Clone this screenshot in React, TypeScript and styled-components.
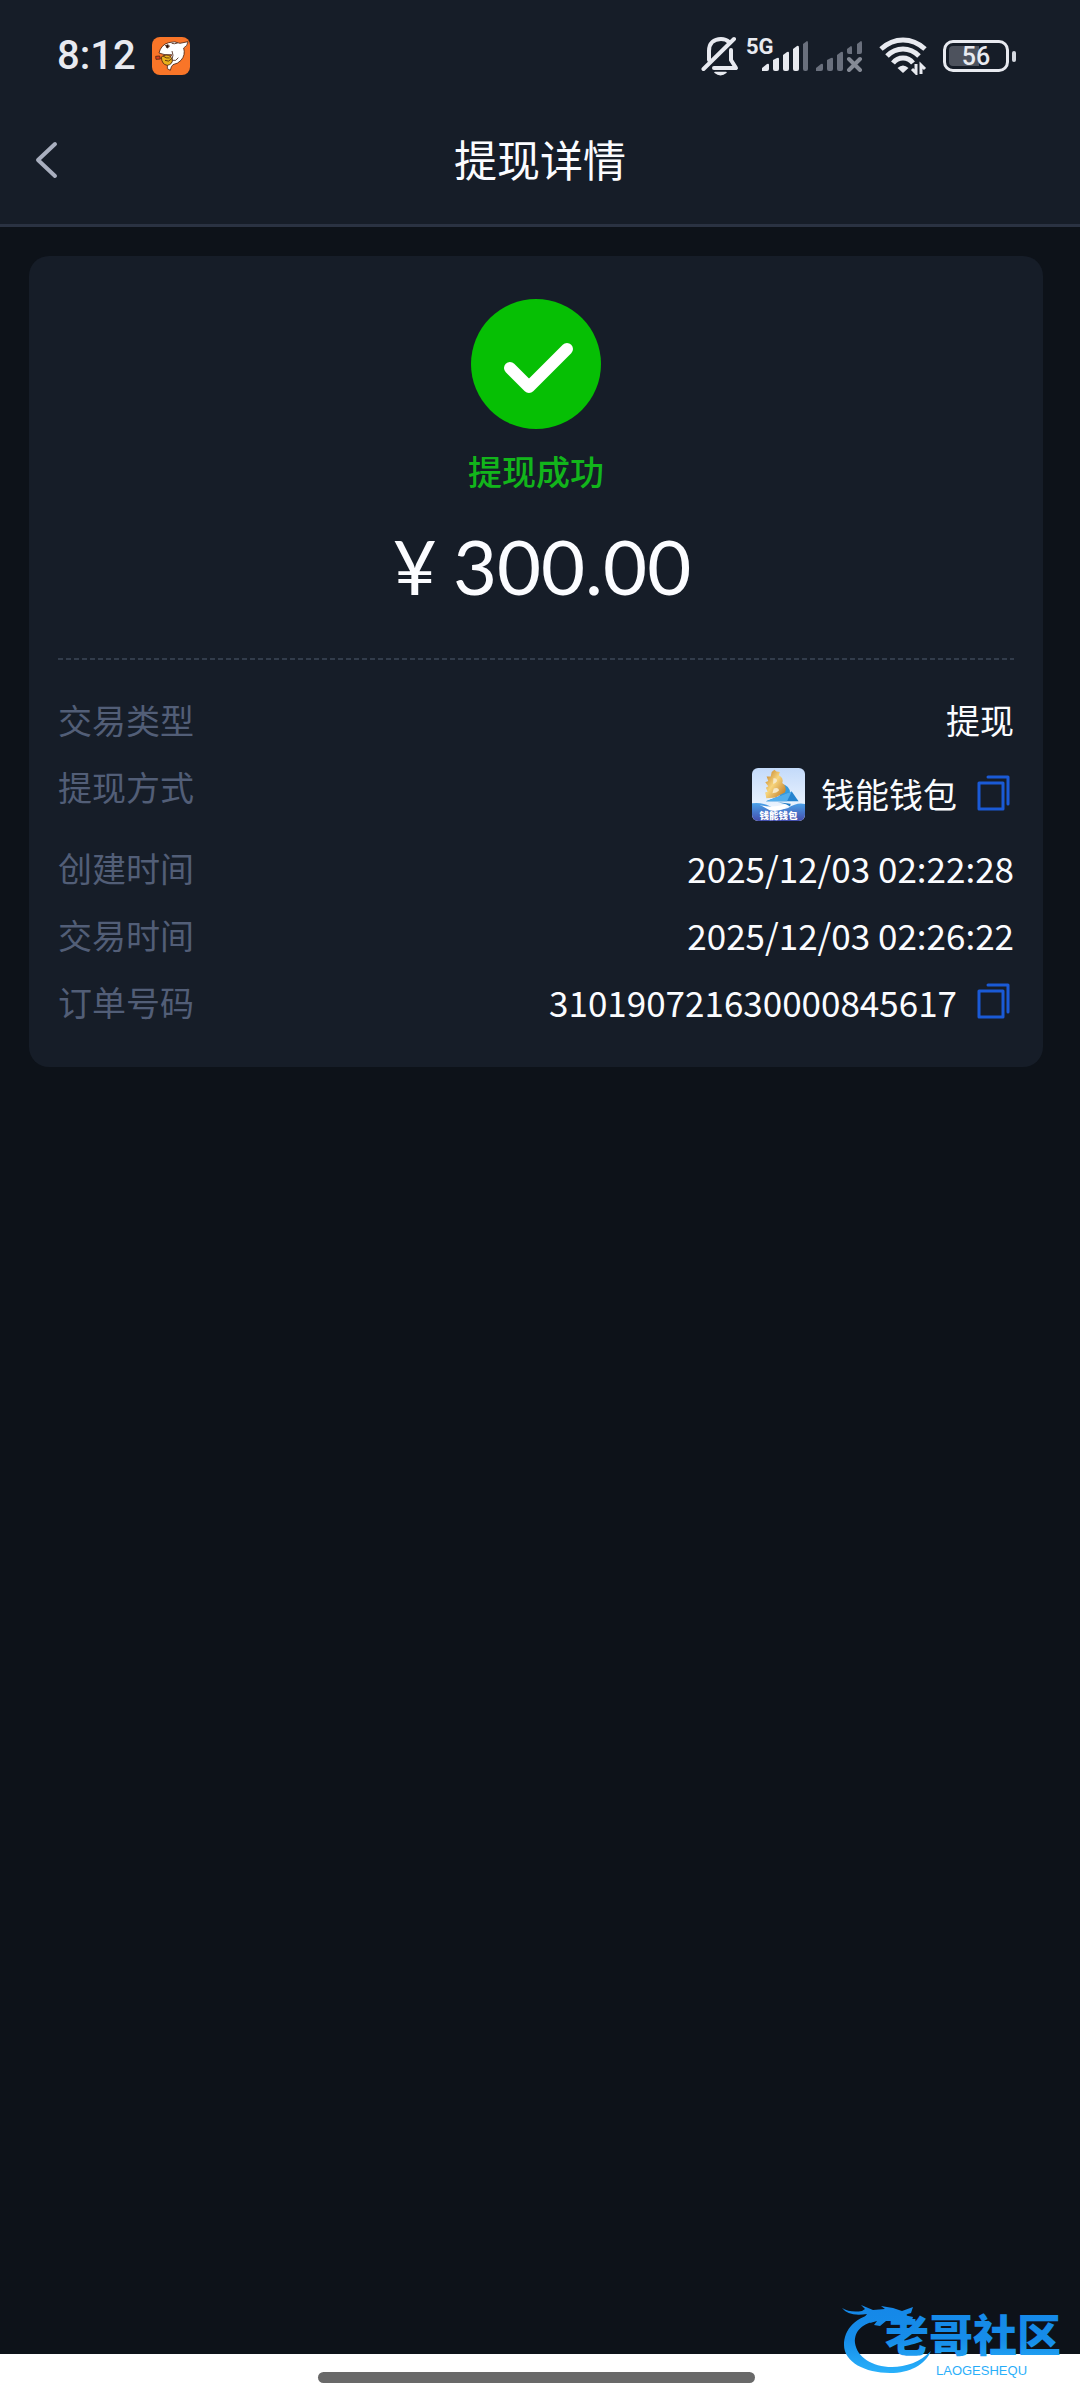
import React from "react";
import styled, { createGlobalStyle } from "styled-components";

const GlobalStyle = createGlobalStyle`
  *, *::before, *::after { box-sizing: border-box; }
  body {
    margin: 0;
    background: #0d1219;
    color: #fbfcff;
    font-family: "Noto Sans CJK SC", "Noto Sans", sans-serif;
  }
  svg { display: block; flex: none; }
`;

const Page = styled.div`
  position: relative;
  display: flex;
  flex-direction: column;
  min-height: 100vh;
`;

const StatusBar = styled.div`
  display: flex;
  align-items: center;
  justify-content: space-between;
  height: 112px;
  padding: 0 64px 0 57px;
  background: #161d28;
  color: #e8eaf0;
`;

const StatusGroup = styled.div<{ $gap: number }>`
  display: flex;
  align-items: center;
  gap: ${(p) => p.$gap}px;
`;

const Clock = styled.time`
  font-family: Roboto, sans-serif;
  font-size: 40px;
  line-height: 56px;
  font-weight: 500;
`;

const Signal = styled.div`
  position: relative;
  padding-left: 16px;
`;

const NetworkType = styled.span`
  position: absolute;
  left: 0;
  top: -5px;
  font-family: Roboto, sans-serif;
  font-size: 22px;
  line-height: 22px;
  font-weight: 700;
`;

const Battery = styled.div`
  display: flex;
  align-items: center;
  gap: 3px;

  &::after {
    content: "";
    width: 4px;
    height: 11px;
    border-radius: 2px;
    background: #d5d8df;
  }
`;

const BatteryBody = styled.div<{ $level: number }>`
  width: 66px;
  height: 32px;
  padding: 3px;
  border: 3px solid #e8eaf0;
  border-radius: 10px;
  background: linear-gradient(to right, #4d525d ${(p) => p.$level}%, transparent ${(p) => p.$level}%) content-box;
  font-family: Roboto, sans-serif;
  font-size: 25px;
  line-height: 22px;
  font-weight: 500;
  text-align: center;
`;

const Header = styled.header`
  display: grid;
  grid-template-columns: 96px 1fr 96px;
  align-items: center;
  padding-bottom: 16px;
  border-bottom: 3px solid #2a3242;
  background: #161d28;
`;

const BackButton = styled.button`
  display: flex;
  align-items: center;
  height: 96px;
  padding: 0 0 0 34px;
  border: 0;
  background: none;
  color: #a9afbf;
  cursor: pointer;
`;

const Title = styled.h1`
  margin: 0;
  padding-bottom: 4px;
  font-size: 43px;
  line-height: 64px;
  font-weight: 400;
  text-align: center;
`;

const Content = styled.main`
  flex: 1;
  padding: 29px 37px 29px 29px;
`;

const Card = styled.section`
  padding: 43px 29px 40px;
  border-radius: 20px;
  background: #161d28;
`;

const Result = styled.div`
  display: flex;
  flex-direction: column;
  align-items: center;
`;

const ResultText = styled.p`
  margin: 17px 0 25px;
  color: #12b51b;
  font-size: 34px;
  line-height: 50px;
  font-weight: 500;
`;

const Amount = styled.p`
  display: flex;
  gap: 16px;
  margin: 0;
  padding-left: 12px;
  font-family: Lato, "Noto Sans CJK SC", sans-serif;
  font-size: 76px;
  line-height: 90px;
`;

const Divider = styled.hr`
  height: 2px;
  margin: 47px 0 35px;
  border: 0;
  background: repeating-linear-gradient(to right, #323c4b 0 5px, transparent 5px 8px);
`;

const Details = styled.dl`
  display: flex;
  flex-direction: column;
  gap: 17px;
  margin: 0;
  font-size: 34px;
  line-height: 50px;
`;

const DetailRow = styled.div`
  display: flex;
  justify-content: space-between;
`;

const Label = styled.dt`
  color: #525e77;
`;

const Value = styled.dd<{ $tall?: boolean; $numeric?: boolean }>`
  display: flex;
  align-items: center;
  gap: 16px;
  min-height: ${(p) => (p.$tall ? 64 : 50)}px;
  margin: 0;
  font-size: ${(p) => (p.$numeric ? 35 : 34)}px;
`;

const CopyButton = styled.button`
  padding: 0 4px;
  border: 0;
  background: none;
  color: #1a5ad6;
  cursor: pointer;
`;

const GestureBar = styled.footer`
  display: flex;
  justify-content: center;
  height: 46px;
  padding: 18px 8px 0 0;
  background: #fff;

  &::before {
    content: "";
    width: 437px;
    height: 11px;
    border-radius: 6px;
    background: #696969;
  }
`;

const Watermark = styled.div`
  position: absolute;
  right: 12px;
  bottom: 20px;
  pointer-events: none;
`;

function NotificationIcon() {
  return (
    <svg width="38" height="38" viewBox="0 0 38 38" aria-hidden="true">
      <rect width="38" height="38" rx="8" fill="#f97528" />
      <g transform="scale(.3333)" stroke="#4a2413" strokeWidth="2.5" strokeLinejoin="round">
        <path d="M11 58 23 57 25 66 12 67Z" fill="#e2401c" />
        <path d="M21 48Q27 23 50 17Q68 11 84 19L108 14Q107 27 95 33Q101 54 87 70Q78 80 63 83Q57 88 55 100L46 95Q45 85 49 79Q61 81 60 68Q52 65 59 53Q38 56 21 48Z" fill="#fff" />
        <path d="M28 60Q43 49 55 58L61 68Q62 82 46 85Q29 83 28 60Z" fill="#e9b21b" />
        <path d="M33 57Q42 65 53 63M39 70Q51 76 57 67M60 42Q66 54 60 68M62 70Q72 74 79 62" fill="none" />
        <path d="M39 24Q45 35 52 29L50 23" fill="#fff" />
        <ellipse cx="46" cy="28" rx="3" ry="5" fill="#20130e" />
        <path d="M59 19Q67 22 77 18" fill="none" />
      </g>
    </svg>
  );
}

function MutedBellIcon() {
  return (
    <svg width="38" height="40" viewBox="0 0 38 40" fill="none" stroke="#e8eaf0" strokeWidth="4" strokeLinecap="round" strokeLinejoin="round" aria-hidden="true">
      <path d="M8 24V15C8 7 13 3 20 3C23 3 26 4 28 6M30 14V24L35 32H13" />
      <path d="M2.500 33 33 3" />
      <path d="M14 36.500H25Q19.500 41 14 36.500Z" fill="#e8eaf0" strokeWidth="1.500" />
    </svg>
  );
}

function SignalIcon() {
  return (
    <svg width="101" height="31" viewBox="0 0 101 31" aria-hidden="true">
      <g fill="#e8eaf0">
        <path d="M0 30V27L5 23Q7 22 7 24V28Q7 30 5 30Z" />
        <path d="M11 19 15 17Q17 16 17 18V28Q17 30 15 30H13Q11 30 11 28Z" />
        <path d="M21 14 25 11Q27 10 27 12V28Q27 30 25 30H23Q21 30 21 28Z" />
        <path d="M31 8 35 5Q37 4 37 7V28Q37 30 35 30H33Q31 30 31 28Z" />
      </g>
      <g fill="#6a707d">
        <path d="M41 3 45 0Q46 0 46 2V28Q46 30 44 30H43Q41 30 41 28Z" />
        <path d="M54 30V27L59 23Q61 22 61 24V28Q61 30 59 30Z" />
        <path d="M65 19 69 17Q71 16 71 18V28Q71 30 69 30H67Q65 30 65 28Z" />
        <path d="M75 14 79 11Q81 10 81 12V28Q81 30 79 30H77Q75 30 75 28Z" />
        <path d="M85 8 89 5Q90 5 90 7V13H87Q85 13 85 11Z" />
        <path d="M95 3 99 0Q100 0 100 2V11Q100 13 98 13H95Z" />
      </g>
      <path d="M87 18 98 29M98 18 87 29" stroke="#858a95" strokeWidth="4" strokeLinecap="round" />
    </svg>
  );
}

function WifiIcon() {
  return (
    <svg width="48" height="38" viewBox="0 0 48 38" fill="none" stroke="#e8eaf0" strokeWidth="5" aria-hidden="true">
      <path d="M2 12Q12 3 24 3T46 12" />
      <path d="M8 19Q15 12 24 12T40 19" />
      <path d="M14 26Q18 21 24 21T34 26" />
      <path d="M18.500 31Q24 26 29.500 31L24 36Z" fill="#e8eaf0" stroke="none" />
      <path d="M37 27V36L33 32M42 37V28L46 32" strokeWidth="3" />
    </svg>
  );
}

function BackIcon() {
  return (
    <svg width="24" height="38" viewBox="0 0 24 38" fill="none" stroke="currentColor" strokeWidth="4" strokeLinecap="round" strokeLinejoin="round" aria-hidden="true">
      <path d="M21 3 4 19 21 35" />
    </svg>
  );
}

function SuccessIcon() {
  return (
    <svg width="130" height="130" viewBox="0 0 130 130" fill="none" aria-hidden="true">
      <circle cx="65" cy="65" r="65" fill="#06bf04" />
      <path d="M39 69 58 88 96 50" stroke="#fff" strokeWidth="12" strokeLinecap="round" strokeLinejoin="round" />
    </svg>
  );
}

function CopyIcon() {
  return (
    <svg width="33" height="38" viewBox="0 0 33 38" fill="none" stroke="currentColor" strokeWidth="3" strokeLinecap="round" strokeLinejoin="round" aria-hidden="true">
      <path d="M2 8H26V34H2Z" />
      <path d="M11 2H31V29" />
    </svg>
  );
}

function WalletLogo() {
  return (
    <svg width="53" height="53" viewBox="0 0 156 156" role="img" aria-label="钱能钱包">
      <defs>
        <linearGradient id="walletSky" x2="0" y2="1">
          <stop stopColor="#c3dafa" />
          <stop offset="1" stopColor="#fafdff" />
        </linearGradient>
        <linearGradient id="walletSea" x2="0" y2="1">
          <stop stopColor="#4aa1e8" />
          <stop offset="1" stopColor="#444dac" />
        </linearGradient>
        <linearGradient id="walletGold" x2="1" y2="1">
          <stop stopColor="#bd751c" />
          <stop offset=".45" stopColor="#f7d57d" />
          <stop offset="1" stopColor="#b9701c" />
        </linearGradient>
        <clipPath id="walletClip"><rect width="156" height="156" rx="18" /></clipPath>
      </defs>
      <g clipPath="url(#walletClip)">
        <rect width="156" height="156" fill="url(#walletSky)" />
        <path d="M0 104Q30 100 56 114T106 118Q132 100 156 106V156H0Z" fill="url(#walletSea)" />
        <path d="M22 108Q60 122 118 100Q88 134 52 124Z" fill="#fff" />
        <path d="M86 47Q112 51 112 74L80 86Z" fill="#329bdf" />
        <path d="M58 12 66 5 72 10 82 12 79 21Q94 28 89 44Q104 54 97 72Q83 78 70 87L42 89 39 72 46 70 41 58 48 54 39 42 48 38 43 25 55 25Z" fill="url(#walletGold)" />
        <path d="M63 30Q76 29 73 40Q68 47 62 46ZM64 60Q80 56 79 67Q73 74 60 74Z" fill="#f5e8c7" />
        <path d="M41 98 117 69 137 98Z" fill="#2583cf" />
        <path d="M41 98 117 69 103 98Z" fill="#52adeb" />
        <path d="M76 101 114 105 112 113 100 107Z" fill="#227cc5" />
        <text x="78" y="150" textAnchor="middle" fontSize="28" fontWeight="900" fill="#fff">钱能钱包</text>
      </g>
    </svg>
  );
}

function CommunityLogo() {
  return (
    <svg width="228" height="80" viewBox="0 0 228 80" role="img" aria-label="老哥社区 LAOGESHEQU">
      <defs>
        <linearGradient id="communityBlue" gradientUnits="userSpaceOnUse" x1="0" y1="8" x2="0" y2="72">
          <stop stopColor="#1588e8" />
          <stop offset=".5" stopColor="#168de9" />
          <stop offset="1" stopColor="#28b0fa" />
        </linearGradient>
      </defs>
      <g fill="url(#communityBlue)">
        <path d="M38 13C15 16 4 30 4 45C4 62 25 73 50 73C70 73 85 65 91 51C80 62 66 67 52 67C32 67 17 57 15 43C14 31 22 23 40 20Z" />
        <path d="M2 8Q10 13 22 11L25 9 21 5 33 10 45 9 41 6 53 8 62 11 73 7 71 13 64 15 73 17 71 23 63 20 56 21 46 21 40 26 34 25 37 21 30 23 32 18 23 19 27 14Q9 17 2 8Z" />
        <text x="45" y="52" fontSize="44" fontWeight="900">老哥社区</text>
        <text x="96" y="75" fontFamily="Liberation Sans, sans-serif" fontSize="13">LAOGESHEQU</text>
      </g>
    </svg>
  );
}

type Detail = { label: string; value: string; logo?: boolean; copy?: boolean; numeric?: boolean };

const details: Detail[] = [
  { label: "交易类型", value: "提现" },
  { label: "提现方式", value: "钱能钱包", logo: true, copy: true },
  { label: "创建时间", value: "2025/12/03 02:22:28", numeric: true },
  { label: "交易时间", value: "2025/12/03 02:26:22", numeric: true },
  { label: "订单号码", value: "310190721630000845617", numeric: true, copy: true },
];

export default function App() {
  return (
    <Page>
      <GlobalStyle />
      <StatusBar>
        <StatusGroup $gap={16}>
          <Clock>8:12</Clock>
          <NotificationIcon />
        </StatusGroup>
        <StatusGroup $gap={16}>
          <StatusGroup $gap={7}>
            <MutedBellIcon />
            <Signal>
              <NetworkType>5G</NetworkType>
              <SignalIcon />
            </Signal>
          </StatusGroup>
          <WifiIcon />
          <Battery>
            <BatteryBody $level={56}>56</BatteryBody>
          </Battery>
        </StatusGroup>
      </StatusBar>
      <Header>
        <BackButton type="button" aria-label="返回">
          <BackIcon />
        </BackButton>
        <Title>提现详情</Title>
      </Header>
      <Content>
        <Card>
          <Result>
            <SuccessIcon />
            <ResultText>提现成功</ResultText>
            <Amount>
              <span>¥</span>
              <span>300.00</span>
            </Amount>
          </Result>
          <Divider />
          <Details>
            {details.map((d) => (
              <DetailRow key={d.label}>
                <Label>{d.label}</Label>
                <Value $tall={d.logo} $numeric={d.numeric}>
                  {d.logo && <WalletLogo />}
                  <span>{d.value}</span>
                  {d.copy && (
                    <CopyButton type="button" aria-label={`复制${d.label}`}>
                      <CopyIcon />
                    </CopyButton>
                  )}
                </Value>
              </DetailRow>
            ))}
          </Details>
        </Card>
      </Content>
      <GestureBar />
      <Watermark>
        <CommunityLogo />
      </Watermark>
    </Page>
  );
}
